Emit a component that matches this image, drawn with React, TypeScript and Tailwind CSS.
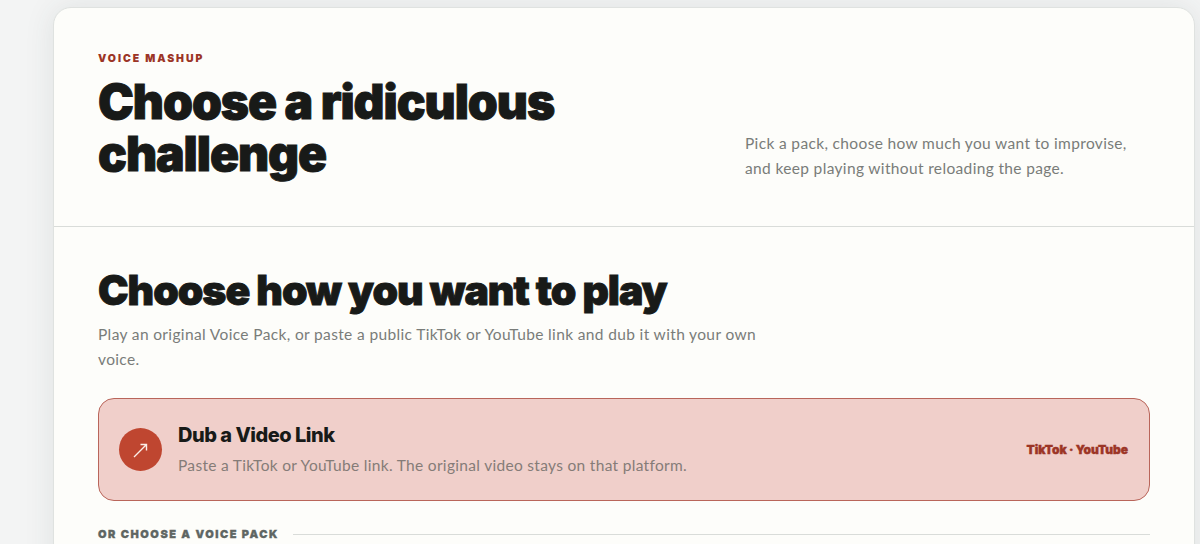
import React from "react";

export default function App() {
  return (
    <div className="h-[544px] w-[1200px] overflow-hidden bg-[#f3f4f4] pt-[7px] pl-[53px] pr-[5px] font-['Lato',sans-serif]">
      <div className="h-[600px] rounded-t-[18px] border border-[#dfe2e0] bg-[#fdfdfa] shadow-[0_0_30px_rgba(50,70,70,0.1)]">
        <header className="flex h-[219px] items-end justify-between border-b border-[#d9dcd9] pl-11 pr-[64px] pb-[45px]">
          <div className="mb-[1px]">
            <p className="mb-[10px] font-['Inter',sans-serif] text-[10.5px] leading-[14px] font-black tracking-[1.95px] text-[#9c3526]">VOICE MASHUP</p>
            <h1 className="w-[520px] font-['Inter',sans-serif] text-[48px] leading-[52px] font-black tracking-[-1.05px] text-[#181a18] [-webkit-text-stroke:1px_#181a18]">Choose a ridiculous challenge</h1>
          </div>
          <p className="w-[385px] text-[15.5px] leading-[25px] tracking-[0.35px] text-[#797c79]">Pick a pack, choose how much you want to improvise, and keep playing without reloading the page.</p>
        </header>
        <section className="pt-[36px] pl-11 pr-11">
          <h2 className="font-['Inter',sans-serif] text-[41px] leading-[54px] font-black tracking-[-1.05px] text-[#181a18] [-webkit-text-stroke:0.9px_#181a18]">Choose how you want to play</h2>
          <p className="mt-[5px] w-[680px] text-[15.5px] leading-[25px] tracking-[0.36px] text-[#797c79]">Play an original Voice Pack, or paste a public TikTok or YouTube link and dub it with your own voice.</p>
          <div className="mt-[26px] flex h-[103px] items-center rounded-[16px] border border-[#b9655a] bg-[#f0cfca] pl-[20px] pr-[21px]">
            <div className="flex h-[43px] w-[43px] shrink-0 items-center justify-center rounded-full bg-[#bf4630]">
              <svg width="20" height="20" viewBox="0 0 20 20" fill="none" stroke="#fbeee8" strokeWidth="1.4">
                <path d="M3 17 L15.5 4.5 M9.5 4.5 H15.5 V10.5" />
              </svg>
            </div>
            <div className="ml-[16px] mt-[-3px] grow">
              <h3 className="font-['Inter',sans-serif] text-[20px] leading-[26px] font-extrabold tracking-[-0.5px] text-[#181a18]">Dub a Video Link</h3>
              <p className="mt-[7px] text-[15.5px] leading-[20px] tracking-[0.31px] text-[#857c78]">Paste a TikTok or YouTube link. The original video stays on that platform.</p>
            </div>
            <span className="font-['Inter',sans-serif] text-[12px] font-black tracking-[-0.05px] text-[#9c3526] [-webkit-text-stroke:0.4px_#9c3526]">TikTok · YouTube</span>
          </div>
          <div className="mt-[23px] flex items-center gap-[14px]">
            <span className="font-['Inter',sans-serif] text-[11px] leading-[20px] font-black tracking-[1.55px] text-[#5f6663] [-webkit-text-stroke:0.3px_#5f6663]">OR CHOOSE A VOICE PACK</span>
            <div className="h-px grow bg-[#d9dcd9]" />
          </div>
        </section>
      </div>
    </div>
  );
}
